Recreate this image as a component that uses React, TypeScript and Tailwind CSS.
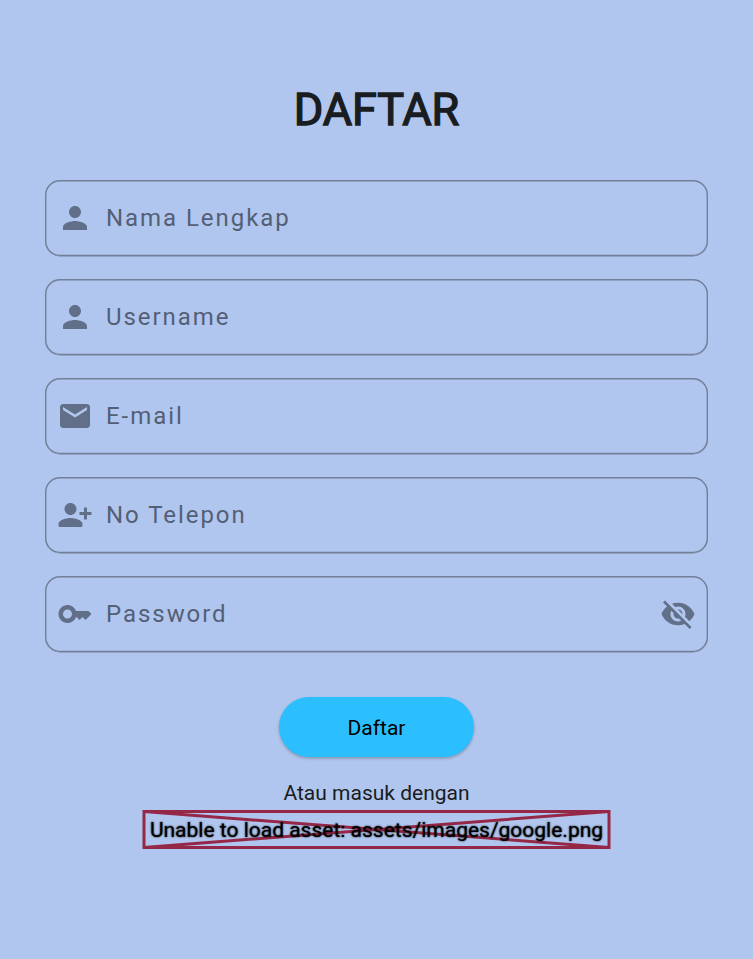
import React from "react";

const PERSON =
  "M12 12c2.21 0 4-1.79 4-4s-1.79-4-4-4-4 1.79-4 4 1.79 4 4 4zm0 2c-2.67 0-8 1.34-8 4v2h16v-2c0-2.66-5.33-4-8-4z";
const MAIL =
  "M20 4H4c-1.1 0-1.99.9-1.99 2L2 18c0 1.1.9 2 2 2h16c1.1 0 2-.9 2-2V6c0-1.1-.9-2-2-2zm0 4l-8 5-8-5V6l8 5 8-5v2z";
const PERSON_ADD =
  "M13 8c0-2.21-1.79-4-4-4S5 5.79 5 8s1.79 4 4 4 4-1.79 4-4zm2 2v2h3v3h2v-3h3v-2h-3V7h-2v3h-3zM1 18v1c0 .55.45 1 1 1h14c.55 0 1-.45 1-1v-1c0-2.66-5.33-4-8-4s-8 1.34-8 4z";
const KEY =
  "M21 10h-8.35C11.83 7.67 9.61 6 7 6c-3.31 0-6 2.69-6 6s2.69 6 6 6c2.61 0 4.83-1.67 5.65-4H13l2 2 2-2 2 2 4-4.04L21 10zM7 15c-1.65 0-3-1.35-3-3s1.35-3 3-3 3 1.35 3 3-1.35 3-3 3z";
const EYE_OFF =
  "M12 7c2.76 0 5 2.24 5 5 0 .65-.13 1.26-.36 1.83l2.92 2.92c1.51-1.26 2.7-2.89 3.43-4.75-1.73-4.39-6-7.5-11-7.5-1.4 0-2.74.25-3.98.7l2.16 2.16C10.74 7.13 11.35 7 12 7zM2 4.27l2.28 2.28.46.46C3.08 8.3 1.78 10.02 1 12c1.73 4.39 6 7.5 11 7.5 1.55 0 3.03-.3 4.38-.84l.42.42L19.73 22 21 20.73 3.27 3 2 4.27zM7.53 9.8l1.55 1.55c-.05.21-.08.43-.08.65 0 1.66 1.34 3 3 3 .22 0 .44-.03.65-.08l1.55 1.55c-.67.33-1.41.53-2.2.53-2.76 0-5-2.24-5-5 0-.79.2-1.53.53-2.2zm4.31-.78l3.15 3.15.02-.16c0-1.66-1.34-3-3-3l-.17.01z";

function Icon({ d }: { d: string }) {
  return (
    <svg viewBox="0 0 24 24" className="size-9 shrink-0 fill-[#626f89]">
      <path d={d} />
    </svg>
  );
}

const fields = [
  { label: "Nama Lengkap", icon: PERSON },
  { label: "Username", icon: PERSON },
  { label: "E-mail", icon: MAIL },
  { label: "No Telepon", icon: PERSON_ADD },
  { label: "Password", icon: KEY, trailing: EYE_OFF },
];

export default function App() {
  return (
    <main className="flex h-[959px] w-full flex-col items-center bg-[#b1c6ee] px-[45px] pt-[76px] font-['Roboto',sans-serif] text-[#191c20]">
      <h1 className="h-[104px] text-[45px] leading-[68px] font-normal tracking-[-0.1px] [-webkit-text-stroke:1.4px_#191c20]">DAFTAR</h1>
      <div className="flex w-full flex-col gap-[23px]">
        {fields.map((f) => (
          <label
            key={f.label}
            className="flex h-[76px] w-full items-center rounded-[15px] px-3 shadow-[inset_0_0.1px_0_1.4px_#727f98,0_0.5px_0_#727f98]"
          >
            <Icon d={f.icon} />
            <span className="ml-[13px] flex-1 text-[24px] leading-9 tracking-[1.95px] text-[#535f75]">
              {f.label}
            </span>
            {f.trailing && <Icon d={f.trailing} />}
          </label>
        ))}
      </div>
      <button className="mt-[45.4px] h-[60px] w-[195px] shrink-0 rounded-full bg-[#2cbfff] pt-[2px] text-[21px] text-black shadow-[0_1.5px_3px_rgba(0,0,0,0.25)]">
        Daftar
      </button>
      <p className="mt-[20.6px] h-8 text-[21px] leading-[30px]">Atau masuk dengan</p>
      <div className="relative flex h-[39px] w-[468px] items-center justify-center">
        <svg viewBox="0 0 468 39" className="absolute inset-0 size-full overflow-visible fill-none stroke-[#952747] stroke-3">
          <g transform="translate(-0.5 0)">
            <rect x="1.5" y="1.5" width="465" height="36" />
            <path d="M1.5 1.5L466.5 37.5M466.5 1.5L1.5 37.5" />
          </g>
        </svg>
        <span className="relative whitespace-nowrap pt-px text-[21px] leading-[30px] text-black [text-shadow:0_0_2px_#000]">
          Unable to load asset: assets/images/google.png
        </span>
      </div>
    </main>
  );
}
